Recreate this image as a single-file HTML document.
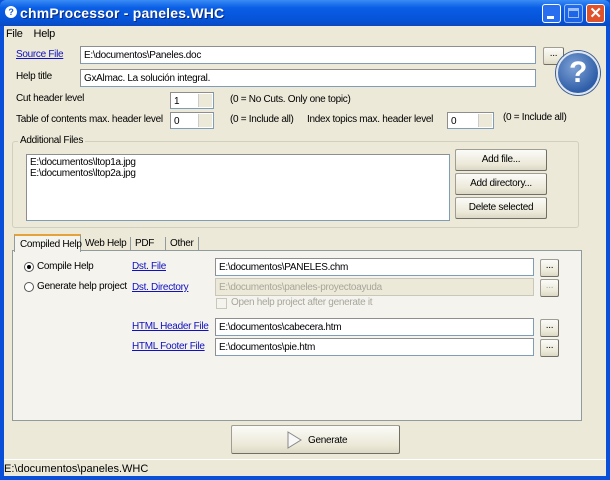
<!DOCTYPE html>
<html><head><meta charset="utf-8"><style>
*{box-sizing:border-box;margin:0;padding:0}
body{width:610px;height:480px;overflow:hidden;background:#0a4fd8;font-family:"Liberation Sans",sans-serif;font-size:10px;letter-spacing:-0.3px;color:#000;position:relative}
.a{position:absolute;white-space:nowrap}
#title{left:0;top:0;width:610px;height:26px;background:linear-gradient(#3a8cf5,#0a5ee6 30%,#0552d6 80%,#0a48c0);border-radius:6px 6px 0 0}
#client{left:4px;top:26px;width:602px;height:450px;background:#ece9d8}
.inp{position:absolute;background:#fff;border:1px solid #7f9db9;border-top-color:#8e8e8e;border-left-color:#8e8e8e;padding:3px 3px;white-space:nowrap;overflow:hidden}
.dis{background:#ece9d8;color:#a8a69a}
.btn{position:absolute;background:linear-gradient(#fbfbf8,#ece9d8 70%,#dcd8c6);border:1px solid #a09e93;border-right-color:#716f64;border-bottom-color:#716f64;border-radius:2px;text-align:center}
.lnk{color:#1010c0;text-decoration:underline}
.spin{position:absolute;width:14px;right:1px;top:1px;bottom:1px;background:#ece9d8;border-left:1px solid #ccc}
.grp{position:absolute;border:1px solid #d0d0bf;border-radius:3px}
.tab{position:absolute;top:237px;height:14px;border-right:1px solid #919b9c;padding:1px 0 0 4px;white-space:nowrap;overflow:hidden}
</style></head><body>
<div id="title" class="a"></div>
<div class="a" style="left:5px;top:6px;width:12px;height:12px;border-radius:50%;background:#fff;color:#1a5fd8;font-size:9px;font-weight:bold;text-align:center;line-height:12px">?</div>
<div class="a" style="left:20px;top:5px;color:#fff;font-weight:bold;font-size:14px;letter-spacing:0.2px;text-shadow:1px 1px #0a2a80">chmProcessor - paneles.WHC</div>
<div class="a" style="left:542px;top:4px;width:19px;height:19px;border:1px solid #fff;border-radius:3px;background:#2a6ef0"><div style="position:absolute;left:4px;top:11px;width:7px;height:3px;background:#fff"></div></div>
<div class="a" style="left:564px;top:4px;width:19px;height:19px;border:1px solid #fff;border-radius:3px;background:#2a6ef0;opacity:.6"><div style="position:absolute;left:3px;top:3px;width:11px;height:10px;border:1px solid #fff;border-top-width:3px"></div></div>
<div class="a" style="left:586px;top:4px;width:19px;height:19px;border:1px solid #fff;border-radius:3px;background:#e0522a;color:#fff;font-weight:bold;font-size:15px;text-align:center;line-height:17px">✕</div>
<div id="client" class="a"></div>
<div class="a" style="left:6px;top:28px;font-size:11px">File &nbsp;&nbsp; Help</div>

<div class="a lnk" style="left:16px;top:49px">Source File</div>
<div class="inp" style="left:80px;top:46px;width:456px;height:18px">E:\documentos\Paneles.doc</div>
<div class="btn" style="left:543px;top:47px;width:21px;height:18px;line-height:12px">...</div>
<div class="a" style="left:16px;top:71px">Help title</div>
<div class="inp" style="left:80px;top:69px;width:456px;height:18px">GxAlmac. La solución integral.</div>
<div class="a" style="left:556px;top:51px;width:44px;height:44px;border-radius:50%;background:radial-gradient(circle at 40% 35%,#7fa2d6,#2f5ea8 70%);border:2px solid #dfe6f0;box-shadow:0 0 0 1px #3d5f96;color:#fff;font-weight:bold;font-size:30px;text-align:center;line-height:40px">?</div>

<div class="a" style="left:16px;top:93px">Cut header level</div>
<div class="inp" style="left:170px;top:92px;width:44px;height:17px">1<div class="spin"></div></div>
<div class="a" style="left:230px;top:94px">(0 = No Cuts. Only one topic)</div>
<div class="a" style="left:16px;top:114px">Table of contents max. header level</div>
<div class="inp" style="left:170px;top:112px;width:44px;height:17px">0<div class="spin"></div></div>
<div class="a" style="left:230px;top:114px">(0 = Include all)</div>
<div class="a" style="left:307px;top:114px">Index topics max. header level</div>
<div class="inp" style="left:447px;top:112px;width:47px;height:17px">0<div class="spin"></div></div>
<div class="a" style="left:503px;top:112px">(0 = Include all)</div>

<div class="grp" style="left:12px;top:141px;width:567px;height:87px"></div>
<div class="a" style="left:18px;top:135px;background:#ece9d8;padding:0 2px">Additional Files</div>
<div class="inp" style="left:26px;top:154px;width:424px;height:67px;line-height:11px;padding:2px 3px">E:\documentos\ltop1a.jpg<br>E:\documentos\ltop2a.jpg</div>
<div class="btn" style="left:455px;top:149px;width:92px;height:22px;line-height:20px">Add file...</div>
<div class="btn" style="left:455px;top:173px;width:92px;height:22px;line-height:20px">Add directory...</div>
<div class="btn" style="left:455px;top:197px;width:92px;height:22px;line-height:20px">Delete selected</div>

<div class="grp" style="left:12px;top:250px;width:570px;height:171px;border-color:#919b9c;border-radius:0;background:#f4f3ee"></div>
<div class="a" style="left:14px;top:234px;width:67px;height:18px;background:#f4f3ee;border:1px solid #919b9c;border-bottom:none;border-top:2px solid #e6a23a;padding:3px 0 0 5px">Compiled Help</div>
<div class="tab" style="left:81px;width:50px">Web Help</div>
<div class="tab" style="left:131px;width:35px">PDF</div>
<div class="tab" style="left:166px;width:33px">Other</div>

<div class="a" style="left:24px;top:262px;width:10px;height:10px;border-radius:50%;border:1px solid #555;background:#fff"><div style="position:absolute;left:2px;top:2px;width:4px;height:4px;border-radius:50%;background:#000"></div></div>
<div class="a" style="left:37px;top:261px">Compile Help</div>
<div class="a" style="left:24px;top:282px;width:10px;height:10px;border-radius:50%;border:1px solid #555;background:#fff"></div>
<div class="a" style="left:37px;top:281px">Generate help project</div>

<div class="a lnk" style="left:132px;top:261px">Dst. File</div>
<div class="a lnk" style="left:132px;top:282px">Dst. Directory</div>
<div class="a lnk" style="left:132px;top:321px">HTML Header File</div>
<div class="a lnk" style="left:132px;top:341px">HTML Footer File</div>
<div class="inp" style="left:215px;top:258px;width:319px;height:18px">E:\documentos\PANELES.chm</div>
<div class="inp dis" style="left:215px;top:278px;width:319px;height:18px;border-color:#c9c7ba">E:\documentos\paneles-proyectoayuda</div>
<div class="a" style="left:216px;top:298px;width:11px;height:11px;border:1px solid #c9c7ba"></div>
<div class="a" style="left:231px;top:297px;color:#a8a69a">Open help project after generate it</div>
<div class="inp" style="left:215px;top:318px;width:319px;height:18px">E:\documentos\cabecera.htm</div>
<div class="inp" style="left:215px;top:338px;width:319px;height:18px">E:\documentos\pie.htm</div>
<div class="btn" style="left:540px;top:259px;width:19px;height:18px;line-height:12px">...</div>
<div class="btn" style="left:540px;top:279px;width:19px;height:18px;line-height:12px;color:#aaa">...</div>
<div class="btn" style="left:540px;top:319px;width:19px;height:18px;line-height:12px">...</div>
<div class="btn" style="left:540px;top:339px;width:19px;height:18px;line-height:12px">...</div>

<div class="btn" style="left:231px;top:425px;width:169px;height:29px"></div>
<svg class="a" style="left:287px;top:431px" width="16" height="18"><path d="M1 1 L14 9 L1 17 Z" fill="#f8f8f8" stroke="#888"/></svg>
<div class="a" style="left:308px;top:435px">Generate</div>

<div class="a" style="left:4px;top:459px;width:602px;height:1px;background:#fff"></div>
<div class="a" style="left:4px;top:463px;font-size:11px;letter-spacing:0">E:\documentos\paneles.WHC</div>
</body></html>
